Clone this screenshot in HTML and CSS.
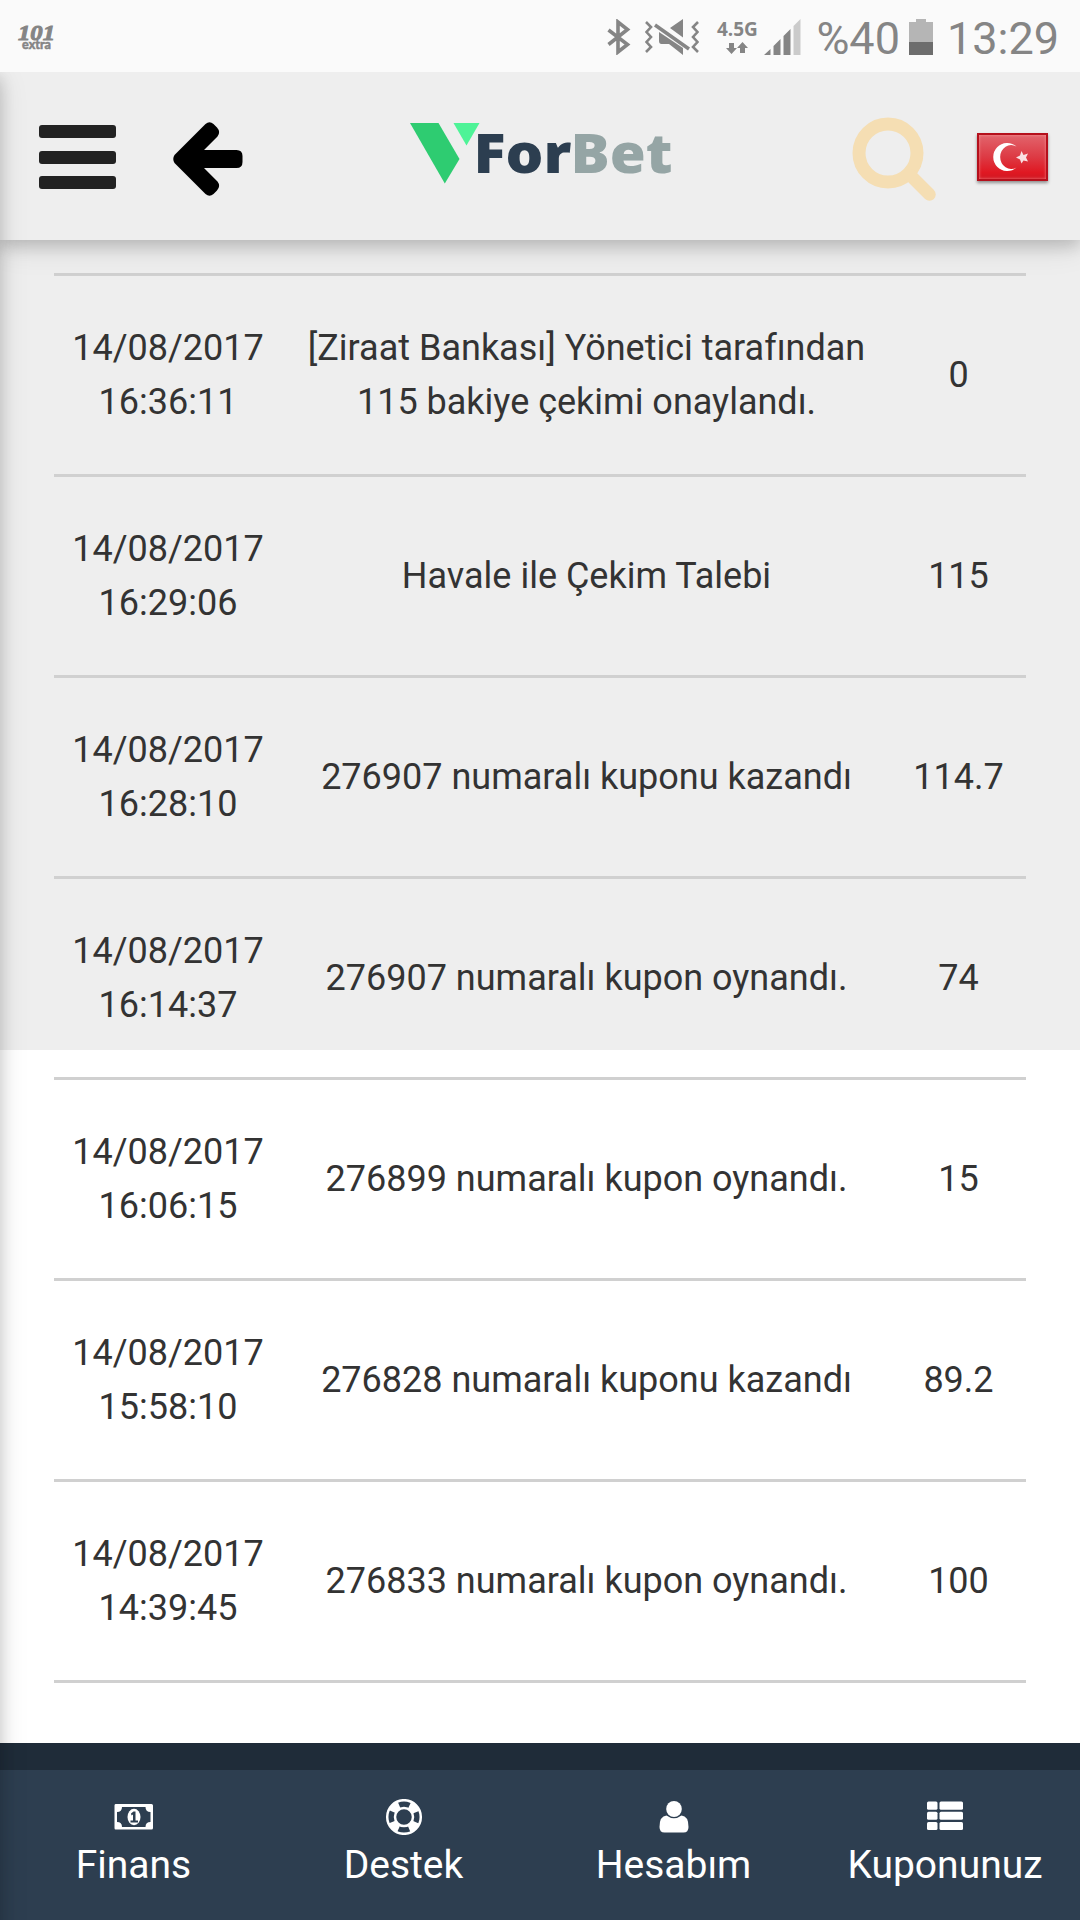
FILE: index.html
```html
<!DOCTYPE html>
<html lang="tr">
<head>
    <meta charset="UTF-8">
    <meta name="viewport" content="width=device-width, initial-scale=1.0">
    <title>ForBet - Hesap Hareketleri</title>
    <link rel="stylesheet" href="styles.css">
</head>
<body>

    <div class="status-bar">
        <svg class="app-badge" width="44" height="32" viewBox="0 0 44 32">
            <text class="badge-number" x="3" y="17" textLength="37" lengthAdjust="spacingAndGlyphs">101</text>
            <text class="badge-extra" x="7" y="26" textLength="29" lengthAdjust="spacingAndGlyphs">extra</text>
        </svg>
        <div class="status-icons">
            <!-- bluetooth -->
            <svg class="bluetooth" width="24" height="36" viewBox="0 0 24 36">
                <path d="M1.500 11 L20.500 25.500 L11 33 V3 L20.500 10.500 L1.500 25.500" fill="none" stroke="#858585" stroke-width="3.600"/>
            </svg>
            <!-- vibrate / mute -->
            <svg class="mute" width="54" height="36" viewBox="0 0 54 36">
                <path d="M1 3 L6 8 L1.500 13 L6 18 L1.500 23 L6 28 L1 33 M53 3 L48 8 L52.500 13 L48 18 L52.500 23 L48 28 L53 33" fill="none" stroke="#858585" stroke-width="2.600"/>
                <path d="M25 9 L38 0 V18.500 Z M14 13 L38 29 V36 L24 25 H16.500 Q14 25 14 22 Z" fill="#858585"/>
                <path d="M10 6 L44 30" stroke="#858585" stroke-width="3.500"/>
            </svg>
            <div class="network">
                <span>4.5G</span>
                <svg width="22" height="12" viewBox="0 0 22 12">
                    <path d="M3 1 H8 V6 H11 L5.500 12 L0 6 H3 Z M14 11 H19 V6 H22 L16.500 0 L11 6 H14 Z" fill="#858585"/>
                </svg>
            </div>
            <svg class="signal" width="37" height="36" viewBox="0 0 37 36">
                <path d="M0 36 L6.500 30 V36 Z M9.500 27 L16.500 20 V36 H9.500 Z M19.500 17 L26.500 10 V36 H19.500 Z" fill="#858585"/>
                <path d="M29.500 7 L36.500 0 V36 H29.500 Z" fill="#cbcbcb"/>
            </svg>
            <span class="percent">%40</span>
            <svg class="battery" width="24" height="36" viewBox="0 0 24 36">
                <path d="M0 3 H7 V0 H17 V3 H24 V23 H0 Z" fill="#b5b5b5"/>
                <path d="M0 23 H24 V36 H0 Z" fill="#6d6d6d"/>
            </svg>
            <span class="clock">13:29</span>
        </div>
    </div>

    <div class="app">
        <div class="drawer-edge"></div>

        <header class="header">
            <div class="menu-btn">
                <span></span>
                <span></span>
                <span></span>
            </div>
            <svg class="back" width="74" height="78" viewBox="0 0 74 78">
                <path d="M4.500 35 L35.500 4 Q39.500 0.500 43.500 4 L47 7.500 Q51 12 47.500 16.500 L34 30 H66.500 Q72.500 30 72.500 36 V42 Q72.500 48 66.500 48 H34 L47.500 61.500 Q51 66 47 70.500 L43.500 74 Q39.500 77.500 35.500 74 L4.500 43 Q2 39 4.500 35 Z"/>
            </svg>
            <svg class="logo" width="270" height="80" viewBox="0 0 270 80">
                <path d="M0 3 H28.500 L49.500 39 L34.800 63.500 Z" fill="#2ecc71"/>
                <path d="M43.500 3 H69.500 L56.500 25.500 Z" fill="#4ef397"/>
                <text x="63.500" y="53" fill="#2c3e50" textLength="98" lengthAdjust="spacingAndGlyphs">For</text>
                <text x="160.500" y="53" fill="#95a5a5" textLength="102" lengthAdjust="spacingAndGlyphs">Bet</text>
            </svg>
            <svg class="search" width="86" height="86" viewBox="0 0 86 86">
                <circle cx="36" cy="36" r="29" fill="none" stroke="#f5deb3" stroke-width="13"/>
                <path d="M58 58 L77.500 77.500" stroke="#f5deb3" stroke-width="12.500" stroke-linecap="round"/>
            </svg>
            <div class="flag">
                <svg width="67" height="44" viewBox="0 0 67 44">
                    <path d="M37.500 11.500 A14 14 0 1 0 37.500 32.500 A11 12 0 1 1 37.500 11.500 Z" fill="#fff"/>
                    <path d="M42.500 16 L44.500 20 L49 18.500 L47 22.500 L49 26.500 L44.500 25.500 L42.500 28.500 L41 24.500 L37 22.500 L41 20.500 Z" fill="#fff" opacity="0.850"/>
                </svg>
            </div>
        </header>

        <main class="content">
            <table class="history">
                <tr>
                    <td class="date">14/08/2017 16:36:11</td>
                    <td class="detail">[Ziraat Bankası] Yönetici tarafından 115 bakiye çekimi onaylandı.</td>
                    <td class="amount">0</td>
                </tr>
                <tr>
                    <td class="date">14/08/2017 16:29:06</td>
                    <td class="detail">Havale ile Çekim Talebi</td>
                    <td class="amount">115</td>
                </tr>
                <tr>
                    <td class="date">14/08/2017 16:28:10</td>
                    <td class="detail">276907 numaralı kuponu kazandı</td>
                    <td class="amount">114.7</td>
                </tr>
                <tr>
                    <td class="date">14/08/2017 16:14:37</td>
                    <td class="detail">276907 numaralı kupon oynandı.</td>
                    <td class="amount">74</td>
                </tr>
                <tr>
                    <td class="date">14/08/2017 16:06:15</td>
                    <td class="detail">276899 numaralı kupon oynandı.</td>
                    <td class="amount">15</td>
                </tr>
                <tr>
                    <td class="date">14/08/2017 15:58:10</td>
                    <td class="detail">276828 numaralı kuponu kazandı</td>
                    <td class="amount">89.2</td>
                </tr>
                <tr>
                    <td class="date">14/08/2017 14:39:45</td>
                    <td class="detail">276833 numaralı kupon oynandı.</td>
                    <td class="amount">100</td>
                </tr>
            </table>
        </main>

        <nav class="bottom-nav">
            <a class="nav-item">
                <svg width="40" height="36" viewBox="0 0 40 36">
                    <path fill-rule="evenodd" d="M1.500 5 H37.500 Q39 5 39 6.500 V29 Q39 30.500 37.500 30.500 H1.500 Q0.500 30.500 0.500 29 V6.500 Q0.500 5 1.500 5 Z M8 8 Q8 13 3 13 V23 Q8 23 8 28 H31.500 Q31.500 23 36.500 23 V13 Q31.500 13 31.500 8 Z" fill="#fff"/>
                    <ellipse cx="20" cy="18" rx="6.500" ry="8.300" fill="#fff"/>
                    <path d="M17 14.500 L19.500 12.500 H21.500 V21.500 H24 V23.500 H16.500 V21.500 H19 V15.500 L17.500 16.500 Z" fill="#2c3e50"/>
                </svg>
                <span>Finans</span>
            </a>
            <a class="nav-item">
                <svg width="38" height="36" viewBox="0 0 38 36">
                    <g fill="none" stroke="#fff">
                        <circle cx="19" cy="18" r="16.800" stroke-width="2.500"/>
                        <circle cx="19" cy="18" r="9" stroke-width="2.500"/>
                        <circle cx="19" cy="18" r="12.800" stroke-width="8" stroke-dasharray="9.500 10.600" stroke-dashoffset="-5.300"/>
                    </g>
                </svg>
                <span>Destek</span>
            </a>
            <a class="nav-item">
                <svg width="30" height="36" viewBox="0 0 30 36">
                    <ellipse cx="15" cy="10" rx="7.800" ry="8" fill="#fff"/>
                    <path d="M7.500 16.500 Q15 22 22.500 16.500 Q29.500 17 29.500 28 Q29.500 33.500 24.500 33.500 H5.500 Q0.500 33.500 0.500 28 Q0.500 17 7.500 16.500 Z" fill="#fff"/>
                </svg>
                <span>Hesabım</span>
            </a>
            <a class="nav-item">
                <svg width="36" height="36" viewBox="0 0 36 36">
                    <g fill="#fff">
                        <rect x="0" y="2.500" width="10.500" height="8.200" rx="1.500"/>
                        <rect x="12.500" y="2.500" width="23.500" height="8.200" rx="1.500"/>
                        <rect x="0" y="12.800" width="10.500" height="8" rx="1.500"/>
                        <rect x="12.500" y="12.800" width="23.500" height="8" rx="1.500"/>
                        <rect x="0" y="23" width="10.500" height="8" rx="1.500"/>
                        <rect x="12.500" y="23" width="23.500" height="8" rx="1.500"/>
                    </g>
                </svg>
                <span>Kuponunuz</span>
            </a>
        </nav>
    </div>

</body>
</html>
```
FILE: styles.css
```css
* {
    margin: 0;
    padding: 0;
    box-sizing: border-box;
}

body {
    width: 1080px;
    height: 1920px;
    display: flex;
    flex-direction: column;
    background: #fff;
    font-family: Roboto, sans-serif;
    color: #333;
    overflow: hidden;
}

/* status bar */
.status-bar {
    height: 72px;
    padding: 0 21px 0 15px;
    display: flex;
    justify-content: space-between;
    background: #fafafa;
    color: #858585;
}

.app-badge {
    margin-top: 23px;
    fill: #858585;
}

.badge-number {
    font: italic bold 22px "Liberation Serif", serif;
    stroke: #858585;
}

.badge-extra {
    font: bold 14px Lato, sans-serif;
    stroke: #858585;
    stroke-width: 0.6px;
}

.status-icons {
    display: flex;
    align-items: flex-start;
    padding-top: 19px;
}

.mute {
    margin-left: 14px;
}

.network {
    width: 40px;
    margin-left: 18px;
    display: flex;
    flex-direction: column;
    align-items: center;
    font: bold 19px/20px "Open Sans", sans-serif;
}

.network svg {
    margin-top: 3px;
}

.signal {
    margin-left: 7px;
}

.percent,
.clock {
    font-size: 45px;
    line-height: 52px;
    margin-top: -6px;
}

.percent {
    margin-left: 15px;
}

.battery {
    margin-left: 9px;
}

.clock {
    margin-left: 14px;
}

/* page under the status bar */
.app {
    flex: 1;
    position: relative;
    display: flex;
    flex-direction: column;
    overflow: hidden;
}

/* shadow of the closed side menu */
.drawer-edge {
    position: absolute;
    top: 0;
    left: -40px;
    width: 40px;
    height: 1900px;
    z-index: 5;
    box-shadow: 0 6px 15px rgba(0, 0, 0, 0.16), 0 6px 30px rgba(0, 0, 0, 0.12);
}

.header {
    height: 168px;
    padding: 0 32px 0 39px;
    display: flex;
    align-items: flex-start;
    background: #eee;
    position: relative;
    z-index: 2;
    box-shadow: 0 6px 15px rgba(0, 0, 0, 0.16), 0 6px 30px rgba(0, 0, 0, 0.12);
}

.menu-btn {
    width: 77px;
    height: 64px;
    margin-top: 53px;
    display: flex;
    flex-direction: column;
    justify-content: space-between;
}

.menu-btn span {
    height: 13px;
    border-radius: 3px;
    background: #222;
}

.back {
    margin: 48px 0 0 54px;
}

.logo {
    margin: 48px 0 0 166px;
    font: 900 55px "Noto Sans", sans-serif;
}

.search {
    margin: 45px 0 0 172px;
}

.flag {
    width: 71px;
    height: 48px;
    margin: 61px 0 0 39px;
    border: 2px solid #b5101c;
    background: linear-gradient(#e2646c, #dd3a44 50%, #e01822 85%, #d01822);
    box-shadow: 0 2px 3px rgba(0, 0, 0, 0.4), inset 0 0 3px rgba(255, 160, 160, 0.8);
}

/* history list */
.content {
    flex: 1;
    padding: 33px 54px 0;
    background: linear-gradient(#eee 810px, #fff 810px);
}

.history {
    width: 972px;
    table-layout: fixed;
    border-collapse: separate;
    border-spacing: 0;
    border-top: 3px solid #d0d0d0;
    font-size: 36px;
    line-height: 54px;
    text-align: center;
}

.history td {
    height: 201px;
    padding: 0 15px;
    vertical-align: middle;
    border-bottom: 3px solid #d0d0d0;
}

.history .date {
    width: 228px;
}

.history .detail {
    width: 609px;
}

.history .amount {
    width: 135px;
}

/* bottom menu */
.bottom-nav {
    height: 177px;
    display: grid;
    grid-template-columns: 267px 273px 267px 273px;
    background: #2d3e50;
    border-top: 27px solid #1f2c39;
}

.nav-item {
    padding-top: 29px;
    display: flex;
    flex-direction: column;
    align-items: center;
    color: #fff;
}

.nav-item:last-child {
    padding-left: 3px;
}

.nav-item span {
    font-size: 39px;
    line-height: 60px;
}
```
